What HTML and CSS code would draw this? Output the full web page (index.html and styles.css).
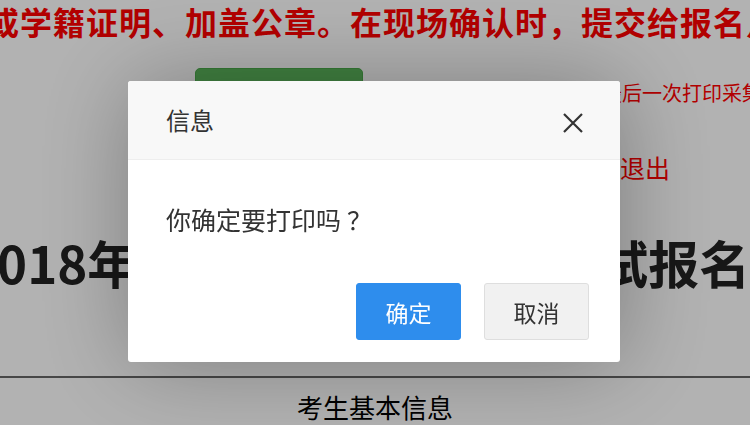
FILE: index.html
```html
<!DOCTYPE html>
<html lang="zh-CN">
<head>
    <meta charset="UTF-8">
    <meta name="viewport" content="width=device-width, initial-scale=1.0">
    <title>报名表打印</title>
    <link rel="stylesheet" href="styles.css">
</head>
<body>
    <div class="page">
        <div class="notice">或学籍证明、加盖公章。在现场确认时，提交给报名点工作人员。</div>
        <div class="actions">
            <button class="print-btn">打印报名表</button>
            <span class="tip">核对无误后点击打印按钮最后一次打印采集表</span>
        </div>
        <div class="logout"><a href="#">退出</a></div>
        <h1 class="title">2018年普通高等学校招生考试报名表</h1>
        <div class="rule"></div>
        <div class="section">考生基本信息</div>
    </div>

    <div class="shade"></div>
    <div class="dialog">
        <div class="dialog-title">
            信息
            <span class="dialog-close">
                <svg width="22" height="22" viewBox="0 0 22 22">
                    <path d="M2 2 L20 20 M20 2 L2 20" stroke="#333" stroke-width="2.2" fill="none"/>
                </svg>
            </span>
        </div>
        <div class="dialog-content">你确定要打印吗<span class="qmark">？</span></div>
        <div class="dialog-btns">
            <button class="btn btn-ok">确定</button>
            <button class="btn btn-cancel">取消</button>
        </div>
    </div>
</body>
</html>
```

FILE: styles.css
```css
body {
    margin: 0;
    width: 750px;
    height: 425px;
    overflow: hidden;
    background-color: #fff;
    font-family: "Noto Sans CJK SC", "Noto Sans", sans-serif;
}
.page {
    white-space: nowrap;
}
.notice {
    padding-top: 5px;
    margin-left: -13px;
    font-size: 32px;
    line-height: 32px;
    letter-spacing: 1px;
    font-weight: bold;
    color: #f00;
}
.actions {
    display: flex;
    align-items: flex-start;
    margin-top: 31px;
    padding-left: 195px;
}
.print-btn {
    flex-shrink: 0;
    width: 168px;
    height: 42px;
    border: 1px solid #4cae4c;
    border-radius: 5px;
    background-color: #5cb85c;
    color: #fff;
    font-family: inherit;
    font-size: 18px;
}
.tip {
    flex-shrink: 0;
    margin-top: 15px;
    margin-left: 19px;
    font-size: 20px;
    line-height: 20px;
    color: #f00;
}
.logout {
    margin-top: 45px;
    padding-left: 620px;
    font-size: 25px;
    line-height: 25px;
}
.logout a {
    color: #f00;
    text-decoration: none;
}
.title {
    margin: 57px 0 0 -33px;
    font-size: 51px;
    line-height: 51px;
    font-weight: bold;
    color: #222;
}
.rule {
    margin-top: 88px;
    border-top: 2px solid #666;
}
.section {
    margin-top: 16px;
    text-align: center;
    font-size: 26px;
    line-height: 26px;
    color: #000;
}
.shade {
    position: fixed;
    top: 0;
    left: 0;
    right: 0;
    bottom: 0;
    background-color: rgba(0, 0, 0, 0.3);
}
.dialog {
    position: fixed;
    top: 81px;
    left: 128px;
    width: 492px;
    border-radius: 3px;
    background-color: #fff;
    box-shadow: 2px 2px 94px rgba(0, 0, 0, 0.3);
    overflow: hidden;
}
.dialog-title {
    position: relative;
    height: 78px;
    padding-left: 38px;
    border-bottom: 1px solid #eee;
    background-color: #f8f8f8;
    font-size: 24px;
    line-height: 78px;
    color: #333;
}
.dialog-close {
    position: absolute;
    top: 31px;
    right: 36px;
    width: 22px;
    height: 22px;
    line-height: 0;
}
.dialog-content {
    padding: 47px 38px 0;
    font-size: 25px;
    line-height: 25px;
    color: #333;
}
.qmark {
    padding-left: 6px;
}
.dialog-btns {
    display: flex;
    justify-content: flex-end;
    gap: 23px;
    margin-top: 51px;
    padding: 0 31px 22px;
}
.btn {
    width: 105px;
    height: 57px;
    border-radius: 3px;
    font-family: inherit;
    font-size: 23px;
    cursor: pointer;
}
.btn-ok {
    border: 1px solid #2e8ded;
    background-color: #2e8ded;
    color: #fff;
}
.btn-cancel {
    border: 1px solid #dedede;
    background-color: #f1f1f1;
    color: #333;
}
```
